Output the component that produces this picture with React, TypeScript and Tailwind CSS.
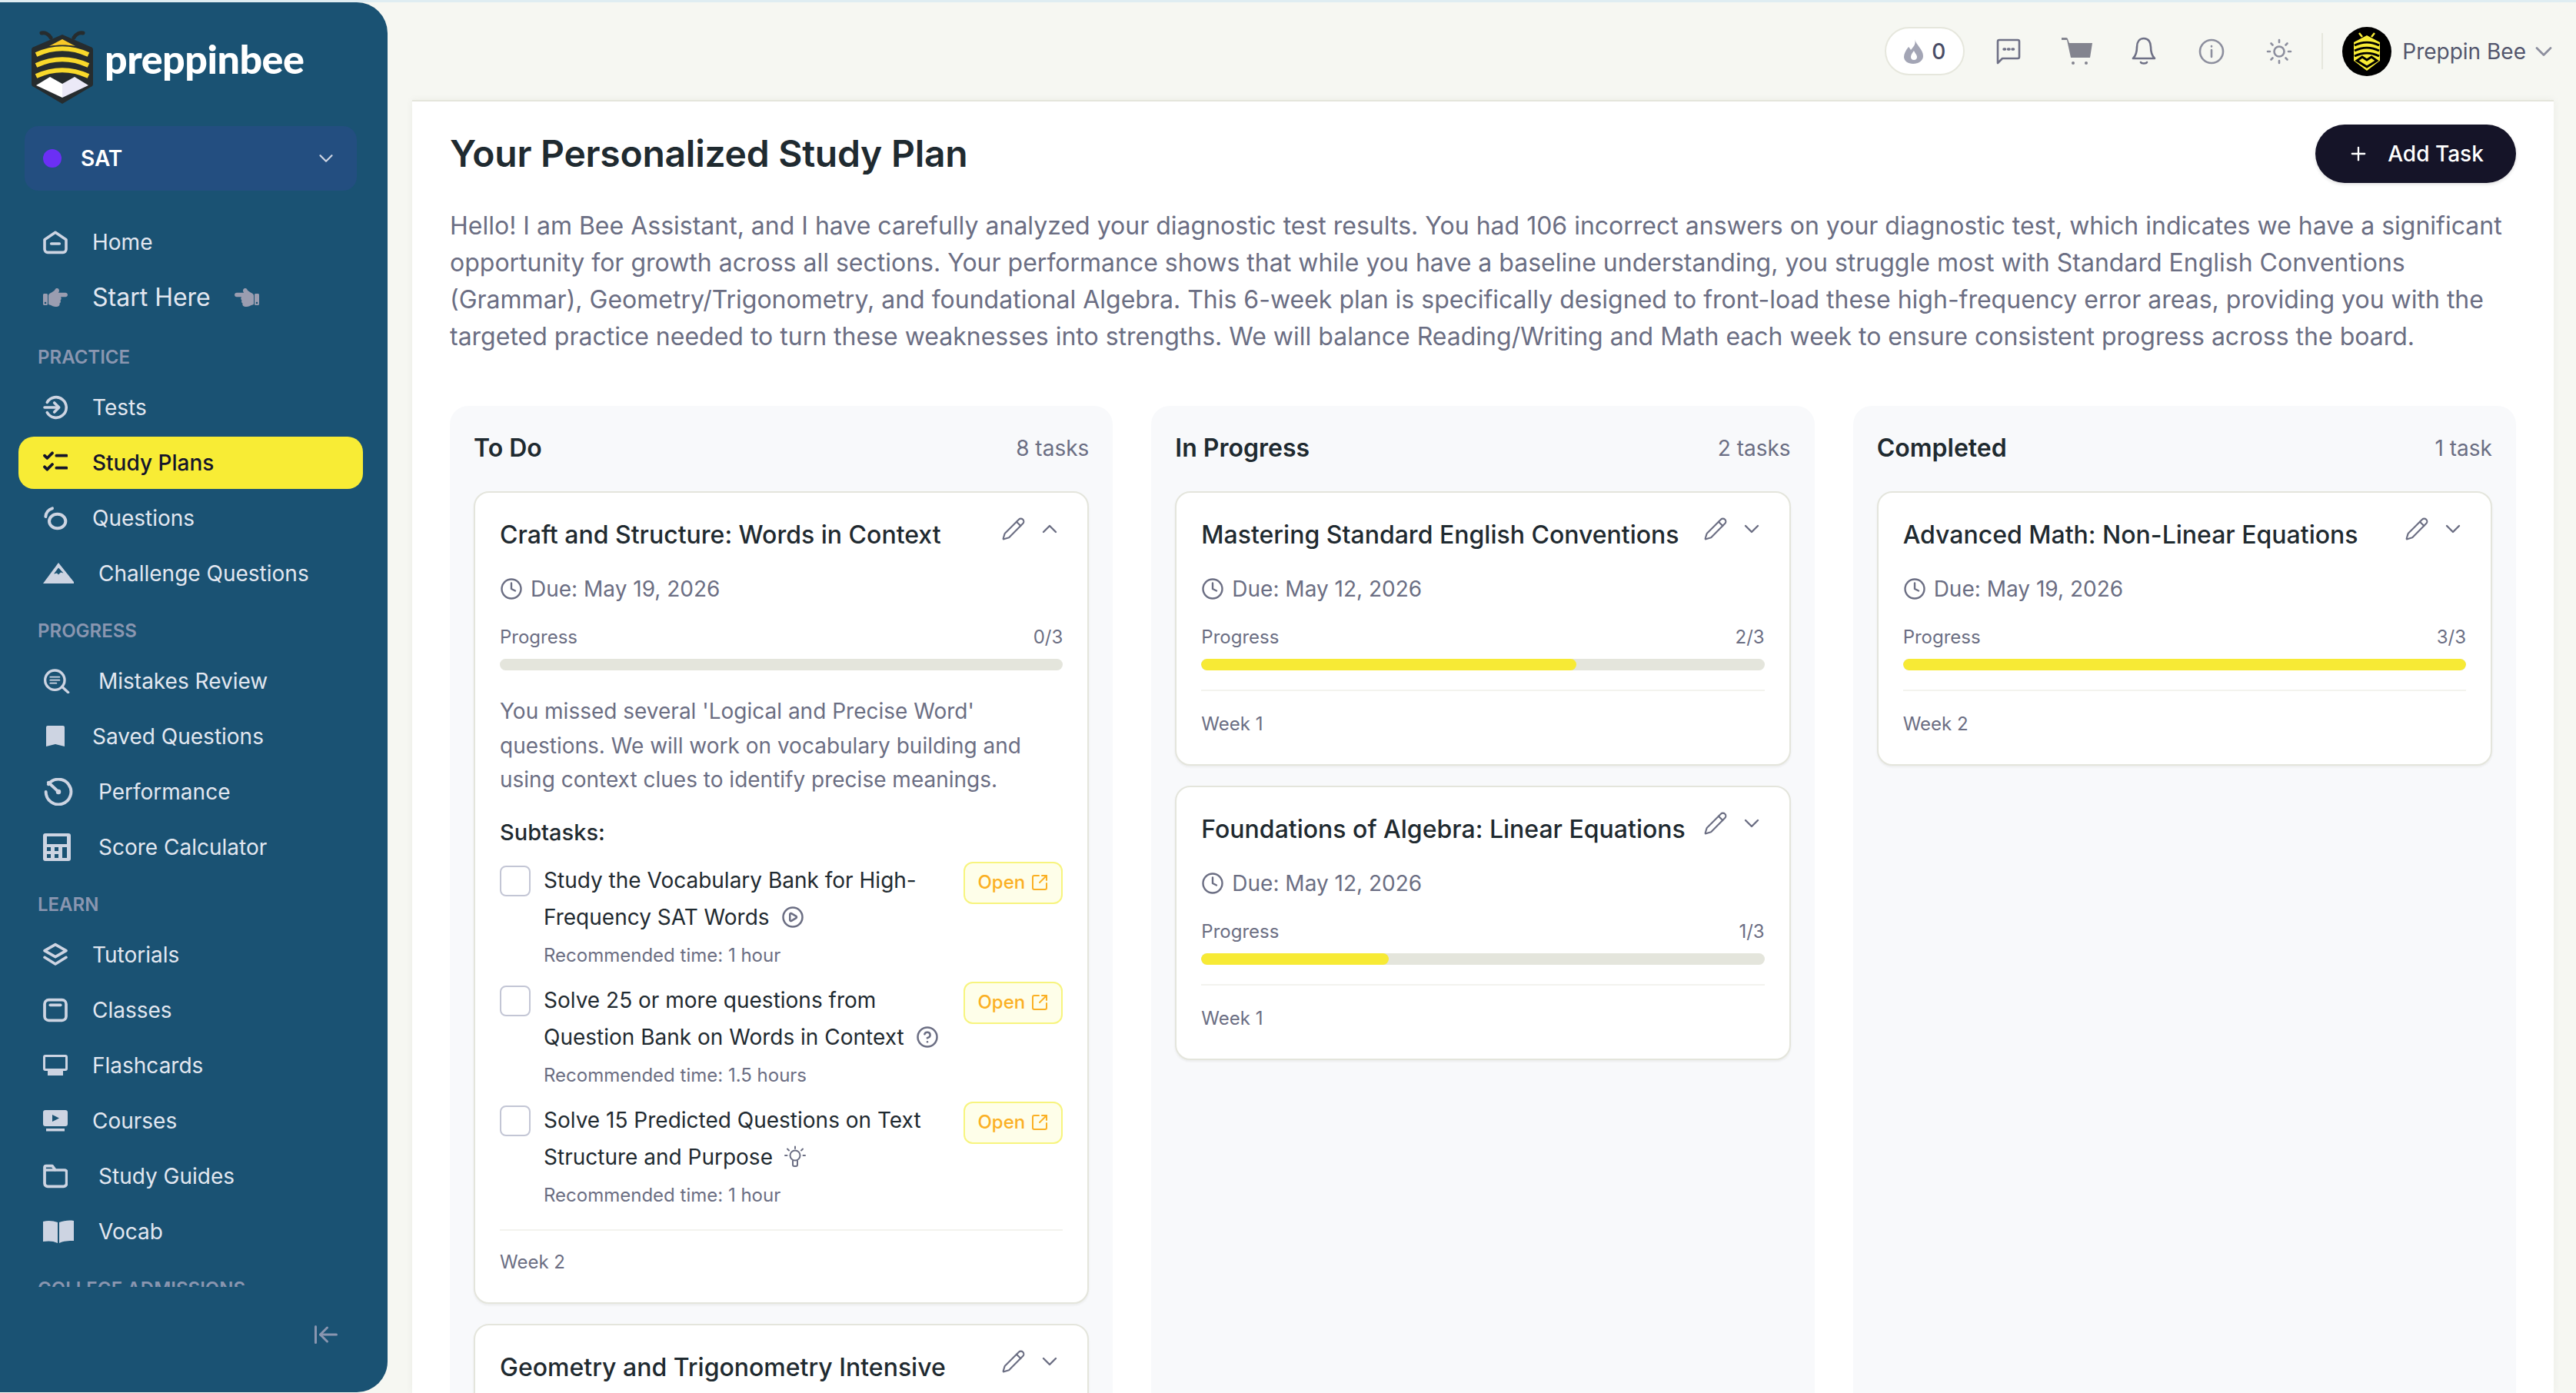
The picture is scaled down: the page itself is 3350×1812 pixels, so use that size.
import React from "react";
import { Clock, Pencil, ChevronDown, ChevronUp, CirclePlay, CircleHelp, SquareArrowOutUpRight, Plus, ArrowLeftToLine } from "lucide-react";
import { FaHandPointRight, FaHandPointLeft } from "react-icons/fa";

const Ico = ({ children, w = 32, h = 32, vb = "0 0 24 24", sw = 2.7 }: { children: React.ReactNode; w?: number; h?: number; vb?: string; sw?: number }) => (
  <svg width={w} height={h} viewBox={vb} fill="none" stroke="currentColor" strokeWidth={sw} strokeLinecap="round" strokeLinejoin="round" className="shrink-0">
    {children}
  </svg>
);

const icons: Record<string, React.ReactNode> = {
  home: <Ico><path d="M1.5 9.5 12 2.5l10.5 7V19a3 3 0 0 1-3 3h-15a3 3 0 0 1-3-3z" /><path d="M8 13.5h8" /></Ico>,
  tests: <Ico><path d="M4 7a10 10 0 1 1 0 10" /><path d="M1.5 12H15" /><path d="M11 7.5 15.5 12 11 16.5" /></Ico>,
  plans: <Ico sw={2.8}><path d="m1.5 5 2.5 2.5L9 2.5" /><path d="m1.5 16 2.5 2.5L9 13.5" /><path d="M13 5h10" /><path d="M13 17h10" /></Ico>,
  questions: <Ico sw={3}><ellipse cx="14" cy="15" rx="8" ry="7" /><path d="M2.5 10.5A9 9 0 0 1 9 2.5" /></Ico>,
  challenge: (
    <svg width="40" height="28" viewBox="0 0 40 28" className="shrink-0">
      <path fill="currentColor" d="M0 27 20 0l20 25v2z" />
      <path fill="#1a5273" d="M20 6.5 14 14.5l4-1 2 2 3-3 3.5 1z" />
    </svg>
  ),
  mistakes: <Ico w={36} h={32} vb="0 0 27 24" sw={2.5}><circle cx="11.5" cy="11" r="9.5" /><path d="m18.5 17.5 6 5.5" /><path d="M7 8h9M7 11h9M7 14h6" strokeWidth={1.4} /></Ico>,
  saved: (
    <svg width="32" height="28" viewBox="0 0 32 28" className="shrink-0"><path fill="currentColor" d="M4 2a2 2 0 0 1 2-2h20a2 2 0 0 1 2 2v25l-12-3-12 3z" /></svg>
  ),
  perf: <Ico w={40} h={36} vb="0 0 24 22" sw={2.4}><path d="M4 5a10 10 0 1 1-2 6" /><path d="M4 3.5 11 10" /><circle cx="12" cy="11" r="2" fill="currentColor" stroke="none" /></Ico>,
  calc: (
    <svg width="36" height="36" viewBox="0 0 36 36" className="shrink-0">
      <path fill="currentColor" fillRule="evenodd" d="M3 0h30a3 3 0 0 1 3 3v30a3 3 0 0 1-3 3H3a3 3 0 0 1-3-3V3a3 3 0 0 1 3-3zm2 4v10h26V4zm0 14v5h5v-5zm10 0v5h5v-5zm10 0v14h6V18zM5 27v5h5v-5zm10 0v5h5v-5z" />
    </svg>
  ),
  tutorials: <Ico><path d="M12 2 1.5 8 12 14l10.5-6z" /><path d="M1.5 14.5 12 21l10.5-6.5" /></Ico>,
  classes: <Ico sw={2.8}><rect x="1.5" y="2" width="21" height="20" rx="4" /><path d="M7 7h10" /></Ico>,
  flash: (
    <svg width="32" height="28" viewBox="0 0 32 28" className="shrink-0">
      <path fill="currentColor" fillRule="evenodd" d="M3 0h26a3 3 0 0 1 3 3v15a3 3 0 0 1-3 3h-1v0H3a3 3 0 0 1-3-3V3a3 3 0 0 1 3-3zm0 3v15h26V3z" />
      <rect x="6" y="21" width="20" height="6" fill="currentColor" />
    </svg>
  ),
  courses: (
    <svg width="32" height="28" viewBox="0 0 32 28" className="shrink-0">
      <path fill="currentColor" fillRule="evenodd" d="M3 0h26a3 3 0 0 1 3 3v15a3 3 0 0 1-3 3H3a3 3 0 0 1-3-3V3a3 3 0 0 1 3-3zm9 6v9l9-4.500z" />
      <rect x="4" y="24" width="24" height="3.500" fill="currentColor" />
    </svg>
  ),
  guides: <Ico sw={2.8}><path d="M1.500 3.500a1.500 1.500 0 0 1 1.500-1.500h6l3 4h9a2 2 0 0 1 2 2v11a3 3 0 0 1-3 3H4.500a3 3 0 0 1-3-3z" /><path d="M2 6h9" /></Ico>,
  vocab: (
    <svg width="40" height="30" viewBox="0 0 40 30" className="shrink-0">
      <path fill="currentColor" d="M0 2c7-2 13-1 19 1v27c-6-3-12-3-19-2zM40 1c-7-1-13 0-19 2v27c6-3 12-3 19-3z" />
    </svg>
  ),
};

const Row = ({ icon, label, wide, active }: { icon: string; label: string; wide?: boolean; active?: boolean }) => (
  <div className={active ? "h-[68px] ml-[24px] mr-[32px] my-[2px] pl-[32px] flex items-center rounded-[20px] bg-[#f8ec35] text-[#14142b]" : "h-[72px] ml-[56px] flex items-center text-[#cdd4e2]"}>
    <span className={wide ? "w-[72px] flex items-center justify-start shrink-0" : "w-[64px] flex items-center justify-start shrink-0"}>{icons[icon]}</span>
    <span className={active ? "text-[28px] font-medium text-[#14142b] whitespace-nowrap" : "text-[28px] text-[#e2e7f0] whitespace-nowrap"}>{label}</span>
  </div>
);

const Section = ({ label, extra }: { label: string; extra?: boolean }) => (
  <div className={extra ? "h-[68px] mt-[3px] pl-[49px] pb-[16px] flex items-end" : "h-[68px] pl-[49px] pb-[16px] flex items-end"}>
    <span className="text-[24px] leading-[26px] font-semibold text-[#8a96b0] whitespace-nowrap">{label}</span>
  </div>
);

const Logo = () => (
  <svg width="82" height="98" viewBox="0 0 82 98" className="shrink-0">
    <path d="M26 12c-3-5-8-7-12-6M56 12c3-5 8-7 12-6" fill="none" stroke="#262c2e" strokeWidth="5" strokeLinecap="round" />
    <path fill="#262c2e" d="M41 8 78 24a4 4 0 0 1 3 4v44a4 4 0 0 1-3 4L41 98 4 76a4 4 0 0 1-3-4V28a4 4 0 0 1 3-4z" />
    <path fill="#f9c827" d="M24 23 41 14l17 9c-11-2-23-2-34 0z" />
    <path fill="none" stroke="#f9d92b" strokeWidth="6" d="M7 34c22-10 46-10 68 0M7 48c22-10 46-10 68 0M7 62c22-10 46-10 68 0" />
    <path fill="#ffffff" d="M7 74 25 63l16 9V90z" />
    <path fill="#ebe9f7" d="M75 74 57 63l-16 9V90z" />
  </svg>
);

const Avatar = () => (
  <div className="w-[64px] h-[64px] rounded-full bg-black flex items-center justify-center shrink-0">
    <svg width="38" height="50" viewBox="0 0 38 50">
      <path d="M13 6 9 1M25 6l4-5" stroke="#f8ec35" strokeWidth="2.500" fill="none" />
      <path fill="#f8ec35" d="M19 4 36 13v24L19 50 2 37V13z" />
      <path d="M3 17c10-5 22-5 32 0M3 24c10-5 22-5 32 0M3 31c10-5 22-5 32 0" stroke="#000" strokeWidth="3" fill="none" />
      <path d="M6 37l7-5 6 4 6-4 7 5-13 8z" fill="none" stroke="#000" strokeWidth="3" />
    </svg>
  </div>
);

const Open = () => (
  <div className="w-[129px] h-[55px] rounded-[12px] border-2 border-[#f7f47e] bg-[#fefee9] flex items-center justify-center gap-[7px] text-[#fbb024] shrink-0">
    <span className="text-[24px] font-medium">Open</span>
    <SquareArrowOutUpRight size={24} strokeWidth={2} />
  </div>
);

const Bulb = () => (
  <svg width="28" height="30" viewBox="0 0 28 30" fill="none" stroke="currentColor" strokeWidth="2" strokeLinecap="round" className="inline-block align-[-6px]">
    <circle cx="14" cy="13" r="6.500" />
    <path d="M11 20v5a2 2 0 0 0 2 2h2a2 2 0 0 0 2-2v-5" />
    <path d="M14 1.500v2.500M4 4.500 6 6.500M24 4.500l-2 2M1 13h2.500M24.500 13H27" />
  </svg>
);

const Subtask = ({ a, b, time, icon }: { a: string; b: string; time: string; icon: React.ReactNode }) => (
  <div className="flex justify-between h-[156px]">
    <div className="flex">
      <div className="w-[40px] h-[40px] mt-[5px] rounded-[8px] border-2 border-[#c3c6d5] bg-white shrink-0" />
      <div className="ml-[17px]">
        <div className="text-[28px] leading-[48px] text-[#1f2a30] whitespace-nowrap">{a}</div>
        <div className="text-[28px] leading-[48px] text-[#1f2a30] whitespace-nowrap flex items-center gap-[15px]">{b}<span className="text-[#6b6e83] flex items-center">{icon}</span></div>
        <div className="mt-[11px] text-[24px] leading-[30px] text-[#6b6e83] whitespace-nowrap">{time}</div>
      </div>
    </div>
    <Open />
  </div>
);

const Card = ({ title, due, value, pct, week, open, children }: { title: string; due?: string; value?: string; pct?: number; week?: string; open?: boolean; children?: React.ReactNode }) => (
  <div className="rounded-[20px] border-2 border-[#e4e5dc] bg-white px-[32px] pt-[33px] pb-[36px] shadow-[0_2px_3px_rgba(30,30,20,0.06)]">
    <div className="flex justify-between items-start">
      <div className="text-[32px] leading-[44px] font-medium text-[#1f2a30] whitespace-nowrap">{title}</div>
      <div className="flex items-center text-[#6b6e83] mt-[-2px] mr-[1px] shrink-0">
        <Pencil size={32} strokeWidth={1.6} />
        <span className="ml-[15px] w-[32px] flex justify-center">{open ? <ChevronUp size={32} strokeWidth={1.8} /> : <ChevronDown size={32} strokeWidth={1.8} />}</span>
      </div>
    </div>
    {due && (
      <>
        <div className="mt-[28px] h-[40px] flex items-center gap-[10px] text-[#6b6e83]">
          <Clock size={30} strokeWidth={1.9} />
          <span className="text-[28px] whitespace-nowrap">{due}</span>
        </div>
        <div className="mt-[27px] h-[32px] flex justify-between items-center text-[24px] text-[#6b6e83]">
          <span>Progress</span>
          <span>{value}</span>
        </div>
        <div className="mt-[12px] h-[15px] rounded-full bg-[#e4e5dc] overflow-hidden">
          <div className="h-full rounded-full bg-[#f7ea35]" style={{ width: `${pct}%` }} />
        </div>
        {children}
        <div className={children ? "mt-[29px] h-[2px] bg-[#f3f3ee]" : "mt-[25px] h-[2px] bg-[#f3f3ee]"} />
        <div className={children ? "mt-[25px] text-[24px] leading-[32px] text-[#6b6e83]" : "mt-[27px] text-[24px] leading-[32px] text-[#6b6e83]"}>{week}</div>
      </>
    )}
  </div>
);

const Column = ({ title, count, children }: { title: string; count: string; children: React.ReactNode }) => (
  <div className="rounded-t-[24px] bg-[#f8f9fb] px-[31px] h-[1400px]">
    <div className="h-[111px] pt-[40px] flex justify-between items-start">
      <span className="text-[32px] leading-[30px] font-semibold text-[#1f2a30]">{title}</span>
      <span className="text-[28px] leading-[30px] text-[#6b6e83]">{count}</span>
    </div>
    <div className="flex flex-col gap-[26px]">{children}</div>
  </div>
);

const HIcon = ({ children, cls }: { children: React.ReactNode; cls: string }) => (
  <span className={cls}>{children}</span>
);

export default function App() {
  return (
    <div className="w-[3350px] h-[1812px] overflow-hidden bg-[#f6f7f2] border-t-[3px] border-[#dfedf2] flex" style={{ fontFamily: "Inter, 'Liberation Sans', sans-serif" }}>
      <aside className="w-[504px] h-[1808px] bg-[#1a5273] rounded-r-[40px] flex flex-col shrink-0">
        <div className="h-[161px] pl-[40px] pt-[34px] flex items-start gap-[14px]">
          <Logo />
          <span className="mt-[-1px] text-[52px] leading-[80px] font-black text-white tracking-[-0.5px]" style={{ fontFamily: "Lato, sans-serif" }}>preppinbee</span>
        </div>
        <div className="ml-[32px] mr-[40px] h-[84px] rounded-[18px] bg-[#234e80] flex items-center pl-[24px] pr-[25px]">
          <span className="w-[24px] h-[24px] rounded-full bg-[#6b2ff5]" />
          <span className="ml-[25px] text-[28px] font-semibold text-white">SAT</span>
          <ChevronDown size={30} strokeWidth={1.8} className="ml-auto text-[#cdd4e2]" />
        </div>
        <div className="h-[1395px] overflow-hidden mt-[31px]">
          <Row icon="home" label="Home" />
          <div className="h-[72px] ml-[56px] flex items-center text-[#9a9db0]">
            <span className="w-[64px]"><FaHandPointRight size={32} /></span>
            <span className="text-[32px] text-[#e2e7f0] whitespace-nowrap">Start Here</span>
            <span className="ml-[31px]"><FaHandPointLeft size={32} /></span>
          </div>
          <Section label="PRACTICE" extra />
          <Row icon="tests" label="Tests" />
          <Row icon="plans" label="Study Plans" active />
          <Row icon="questions" label="Questions" />
          <Row icon="challenge" label="Challenge Questions" wide />
          <Section label="PROGRESS" />
          <Row icon="mistakes" label="Mistakes Review" wide />
          <Row icon="saved" label="Saved Questions" />
          <Row icon="perf" label="Performance" wide />
          <Row icon="calc" label="Score Calculator" wide />
          <Section label="LEARN" />
          <Row icon="tutorials" label="Tutorials" />
          <Row icon="classes" label="Classes" />
          <Row icon="flash" label="Flashcards" />
          <Row icon="courses" label="Courses" />
          <Row icon="guides" label="Study Guides" wide />
          <Row icon="vocab" label="Vocab" wide />
          <Section label="COLLEGE ADMISSIONS" />
        </div>
        <div className="flex justify-end pr-[62px] pt-[44px] text-[#8a96b0]">
          <ArrowLeftToLine size={36} strokeWidth={2} />
        </div>
      </aside>

      <div className="flex-1 min-w-0 flex flex-col">
        <header className="h-[127px] shrink-0 flex items-center justify-end pr-[24px]">
          <div className="w-[104px] h-[63px] rounded-full border-2 border-[#e6e7dd] bg-white flex items-center justify-center gap-[10px]">
            <svg width="26" height="32" viewBox="0 0 26 32" className="shrink-0"><path fill="#a3a5b5" d="M14 0c2 6-1 9-5 14-1-2-2-3-3-4-4 5-6 9-6 13 0 5 5 9 12 9s13-4 13-10c0-9-9-14-11-22zm-1 27c-3 0-4-2-4-4 0-3 2-5 4-8 1 3 4 5 4 8 0 2-1 4-4 4z" /></svg>
            <span className="text-[28px] font-medium text-[#4a4d66]">0</span>
          </div>
          <HIcon cls="ml-[40px] text-[#6f7186]">
            <svg width="34" height="34" viewBox="0 0 34 34" fill="none" stroke="currentColor" strokeWidth="2.600" strokeLinejoin="round" className="block"><path d="M3 4a2 2 0 0 1 2-2h24a2 2 0 0 1 2 2v20a2 2 0 0 1-2 2H9l-6 6z" /><path d="M11 14h1.500M16.500 14H18M22 14h1.500" strokeWidth="3.500" strokeLinecap="round" /></svg>
          </HIcon>
          <HIcon cls="ml-[51px] text-[#83848f]">
            <svg width="42" height="36" viewBox="0 0 42 36" fill="currentColor" className="block"><path d="M1 0h6a2 2 0 0 1 2 1.500L11 7h30l-3 19H13L8 3H1z" /><circle cx="16" cy="33" r="2" /><circle cx="33" cy="33" r="2" /></svg>
          </HIcon>
          <HIcon cls="ml-[49px] text-[#6f7186]">
            <svg width="34" height="38" viewBox="0 0 34 38" fill="none" stroke="currentColor" strokeWidth="2.600" strokeLinejoin="round" strokeLinecap="round" className="block"><path d="M17 2c-6 0-9 5-9 11 0 7-1 11-5 15h28c-4-4-5-8-5-15 0-6-3-11-9-11z" /><path d="M13 33c1 2 7 2 8 0" /></svg>
          </HIcon>
          <HIcon cls="ml-[54px] text-[#8d8f9e]">
            <svg width="34" height="34" viewBox="0 0 34 34" fill="none" stroke="currentColor" strokeWidth="2.600" strokeLinecap="round" className="block"><circle cx="17" cy="17" r="15" /><path d="M17 15v9M17 10v.5" /></svg>
          </HIcon>
          <HIcon cls="ml-[54px] text-[#8d8f9e]">
            <svg width="34" height="34" viewBox="0 0 34 34" fill="none" stroke="currentColor" strokeWidth="2.600" strokeLinecap="round" className="block"><circle cx="17" cy="17" r="6.500" /><path d="M17 2v3M17 29v3M2 17h3M29 17h3M6.500 6.500l2 2M25.500 25.500l2 2M6.500 27.500l2-2M25.500 8.500l2-2" /></svg>
          </HIcon>
          <span className="ml-[38px] w-[2px] h-[47px] bg-[#e6e7dd]" />
          <span className="ml-[25px]"><Avatar /></span>
          <span className="ml-[14px] text-[28px] text-[#53566d] whitespace-nowrap">Preppin Bee</span>
          <ChevronDown size={36} strokeWidth={1.8} className="ml-[5px] text-[#8d8f9e]" />
        </header>

        <main className="flex-1 ml-[32px] mr-[29px] bg-white border-t-2 border-[#e4e5db] shadow-[0_0_10px_rgba(60,60,40,0.05)] px-[49px] pt-[30px] overflow-hidden">
          <div className="flex items-center justify-between h-[76px]">
            <h1 className="text-[48px] font-semibold text-[#1f2a30] tracking-[-0.25px] whitespace-nowrap">Your Personalized Study Plan</h1>
            <button className="w-[261px] h-[76px] rounded-full bg-[#151428] text-white flex items-center justify-center gap-[24px] shadow-[0_2px_4px_rgba(0,0,0,0.12)]">
              <Plus size={28} strokeWidth={2} />
              <span className="text-[28px] font-medium">Add Task</span>
            </button>
          </div>
          <p className="mt-[32px] text-[32px] leading-[48px] text-[#6b6e83]">
            Hello! I am Bee Assistant, and I have carefully analyzed your diagnostic test results. You had 106 incorrect answers on your diagnostic test, which indicates we have a significant opportunity for growth across all sections. Your performance shows that while you have a baseline understanding, you struggle most with Standard English Conventions (Grammar), Geometry/Trigonometry, and foundational Algebra. This 6-week plan is specifically designed to front-load these high-frequency error areas, providing you with the targeted practice needed to turn these weaknesses into strengths. We will balance Reading/Writing and Math each week to ensure consistent progress across the board.
          </p>
          <div className="mt-[66px] grid grid-cols-3 gap-[50px]">
            <Column title="To Do" count="8 tasks">
              <Card title="Craft and Structure: Words in Context" due="Due: May 19, 2026" value="0/3" pct={0} week="Week 2" open>
                <p className="mt-[31px] text-[28px] leading-[44.500px] text-[#6b6e83]">You missed several 'Logical and Precise Word' questions. We will work on vocabulary building and using context clues to identify precise meanings.</p>
                <div className="mt-[28px] text-[29px] leading-[36px] font-medium text-[#1f2a30]">Subtasks:</div>
                <div className="mt-[20px] h-[449px]">
                  <Subtask a="Study the Vocabulary Bank for High-" b="Frequency SAT Words" time="Recommended time: 1 hour" icon={<CirclePlay size={30} strokeWidth={2} />} />
                  <Subtask a="Solve 25 or more questions from" b="Question Bank on Words in Context" time="Recommended time: 1.5 hours" icon={<CircleHelp size={30} strokeWidth={2} />} />
                  <Subtask a="Solve 15 Predicted Questions on Text" b="Structure and Purpose" time="Recommended time: 1 hour" icon={<Bulb />} />
                </div>
              </Card>
              <Card title="Geometry and Trigonometry Intensive" />
            </Column>
            <Column title="In Progress" count="2 tasks">
              <Card title="Mastering Standard English Conventions" due="Due: May 12, 2026" value="2/3" pct={66.6} week="Week 1" />
              <Card title="Foundations of Algebra: Linear Equations" due="Due: May 12, 2026" value="1/3" pct={33.3} week="Week 1" />
            </Column>
            <Column title="Completed" count="1 task">
              <Card title="Advanced Math: Non-Linear Equations" due="Due: May 19, 2026" value="3/3" pct={100} week="Week 2" />
            </Column>
          </div>
        </main>
      </div>
    </div>
  );
}
